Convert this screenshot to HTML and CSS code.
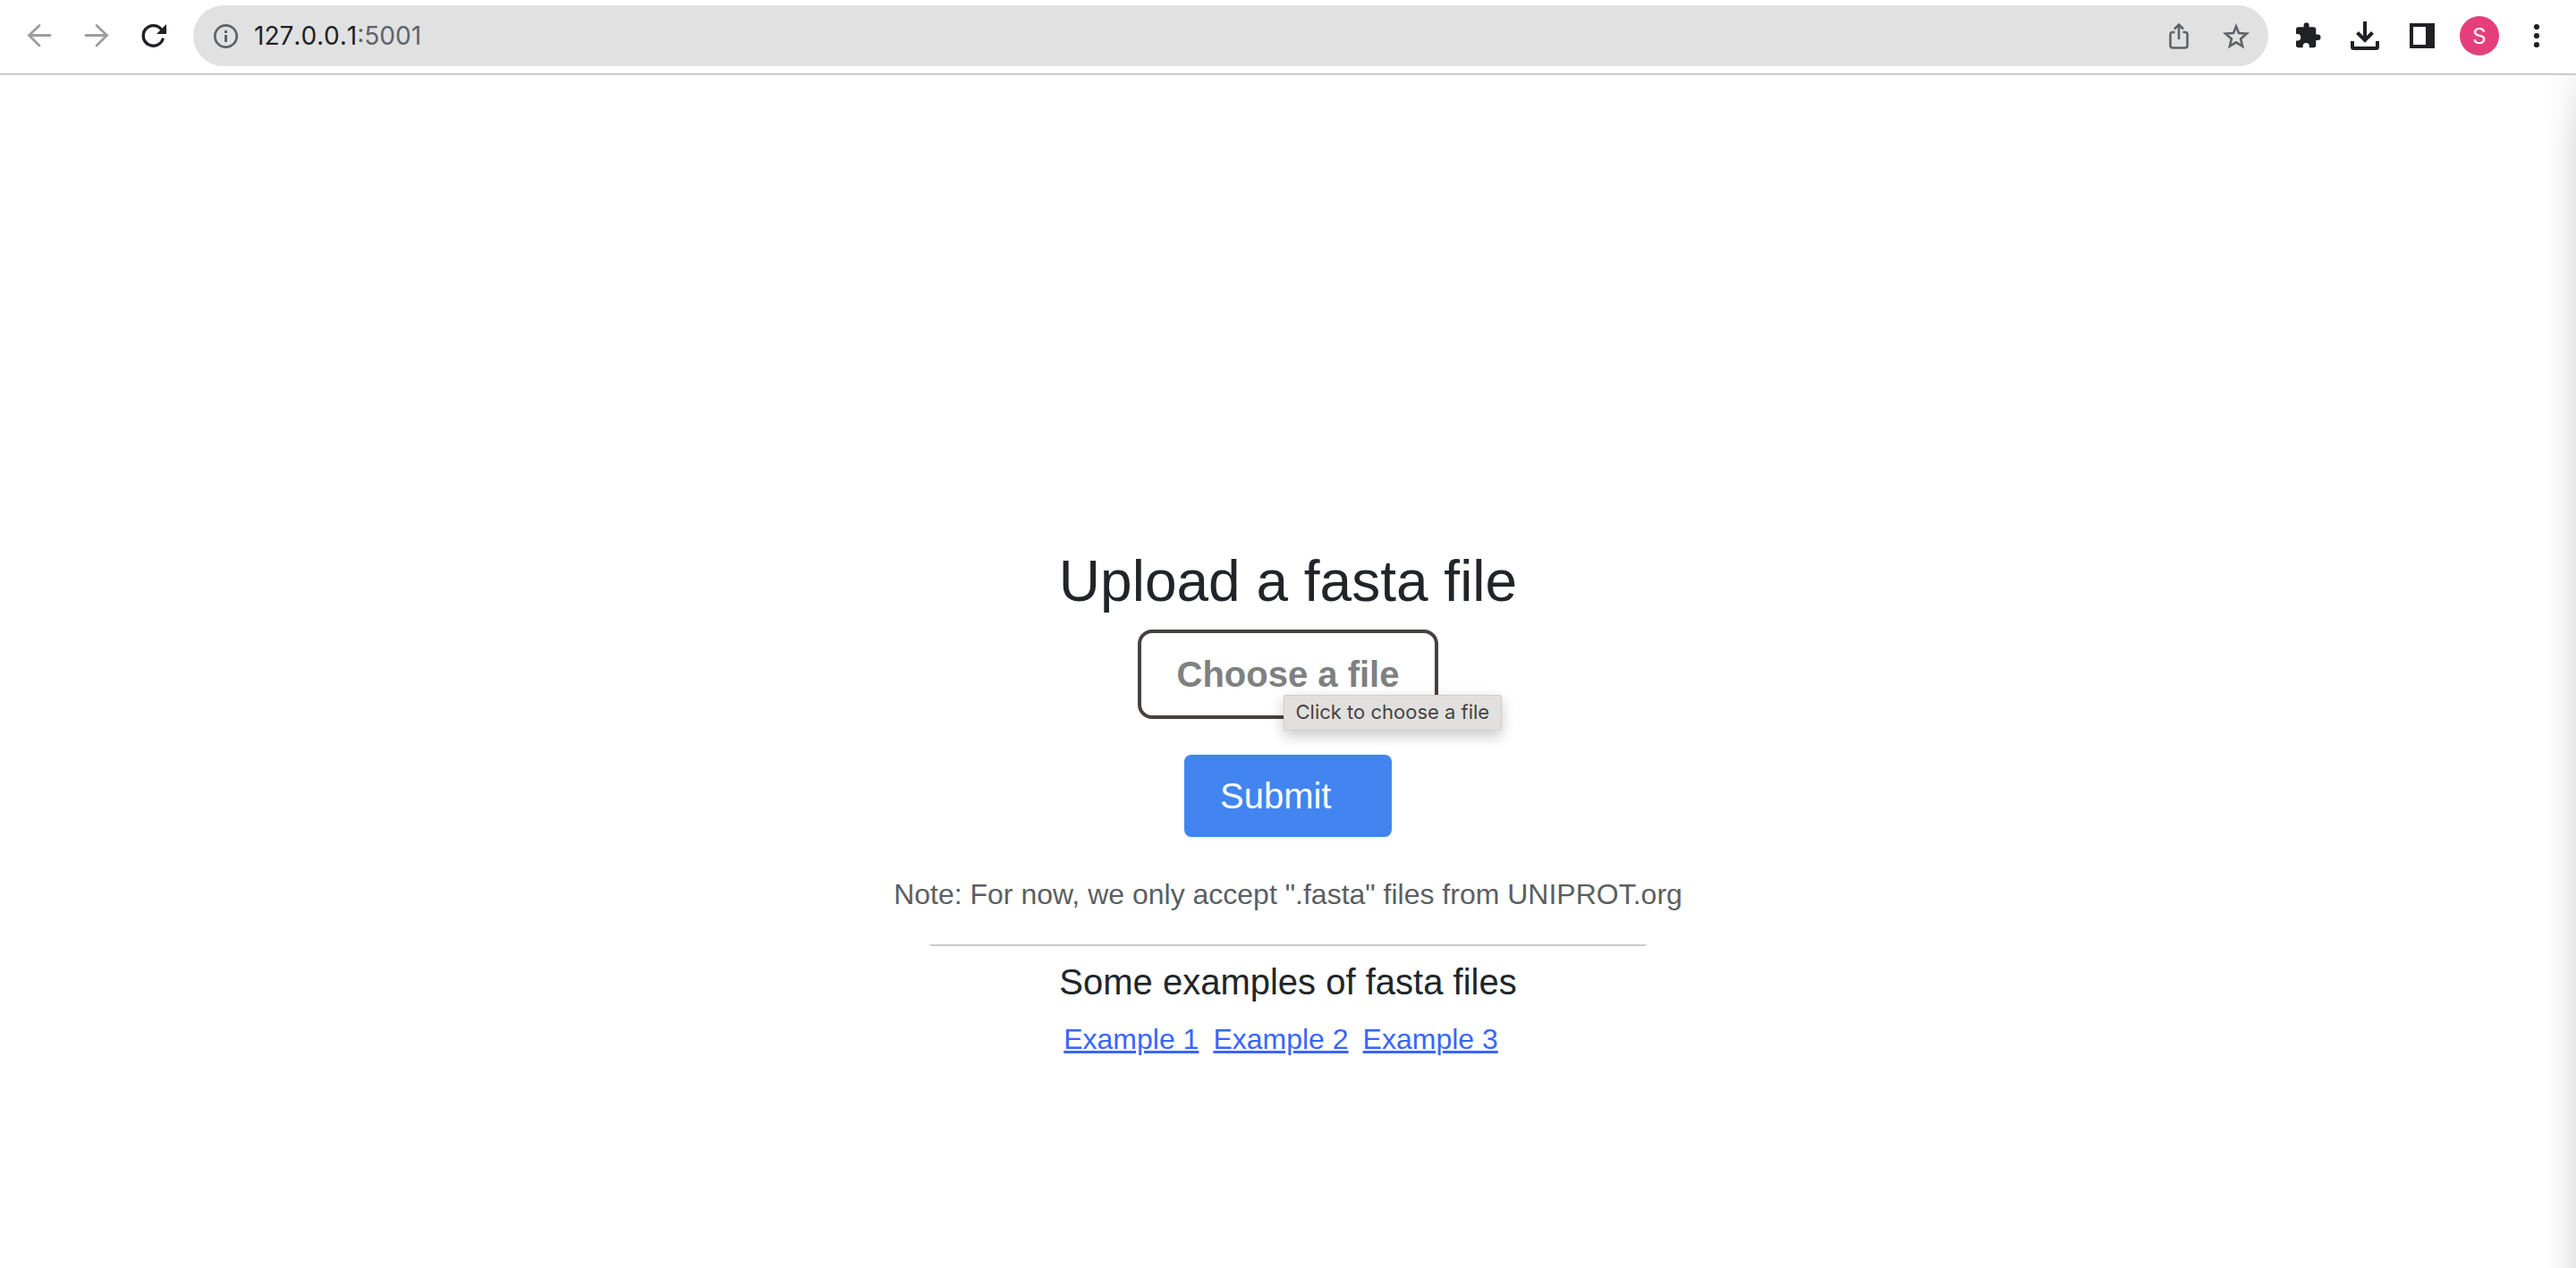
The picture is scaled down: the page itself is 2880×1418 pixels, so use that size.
FILE: index.html
```html
<!DOCTYPE html>
<html lang="en">
<head>
<meta charset="utf-8">
<title>Upload a fasta file</title>
<link rel="stylesheet" href="styles.css">
</head>
<body>
<header class="toolbar">
  <nav class="nav" aria-label="History">
    <button class="icon-button dim" aria-label="Back"><svg class="icon" viewBox="0 0 32 32" fill="none" stroke="currentColor" stroke-width="2.8" stroke-linecap="round"><path d="M28 15.500H5M16 4.500 4.500 15.500 16 27"/></svg></button>
    <button class="icon-button dim" aria-label="Forward"><svg class="icon" viewBox="0 0 32 32" fill="none" stroke="currentColor" stroke-width="2.800" stroke-linecap="round"><path d="M4 15.500h23M16 4.500l11.500 11L16 27"/></svg></button>
    <button class="icon-button" aria-label="Reload"><svg class="icon" viewBox="0 0 32 32"><path d="M26 20A11.300 11.300 0 1 1 24 8.500" fill="none" stroke="currentColor" stroke-width="3.400" stroke-linecap="round"/><path d="M30 3v11H19z" fill="currentColor"/></svg></button>
  </nav>
  <div class="address">
    <svg class="icon" viewBox="0 0 32 32"><circle cx="16.500" cy="16.500" r="12.200" fill="none" stroke="currentColor" stroke-width="2.800"/><path d="M15 10h3v3h-3zM15 15h3v8h-3z" fill="currentColor"/></svg>
    <span class="url"><span class="host">127.0.0.1</span>:5001</span>
    <button class="icon-button" aria-label="Share"><svg class="icon" viewBox="0 0 32 32" fill="none" stroke="currentColor" stroke-width="2.600"><path d="M11.500 12H9a2.500 2.500 0 0 0-2.500 2.500v12A2.500 2.500 0 0 0 9 29.500h14a2.500 2.500 0 0 0 2.500-2.500V14.500a2.500 2.500 0 0 0-2.500-2.500h-2.500M16 20V4M11 8.500l5-5 5 5"/></svg></button>
    <button class="icon-button" aria-label="Bookmark"><svg class="icon" viewBox="0 0 32 32" fill="none" stroke="currentColor" stroke-width="2.600"><path d="m16 5.500 3 7.600 8.800.6-6.700 5.700 2 8.400-7.100-4.500-7.100 4.500 2-8.400-6.700-5.700 8.800-.6z"/></svg></button>
  </div>
  <div class="actions">
    <button class="icon-button" aria-label="Extensions"><svg class="icon" viewBox="0 0 32 32" fill="currentColor"><path d="M27.300 14.500h-2V9a2.700 2.700 0 0 0-2.700-2.700h-5v-2a3 3 0 0 0-6 0v2H5.700A2.700 2.700 0 0 0 3 9v5h1.500a3.500 3.500 0 0 1 0 7.500H3v5a2.700 2.700 0 0 0 2.700 2.700h5v-1.500a3.600 3.600 0 0 1 7.200 0v1.500h4.700a2.700 2.700 0 0 0 2.700-2.700V21h2a3.200 3.200 0 0 0 0-6.500z"/></svg></button>
    <button class="icon-button" aria-label="Downloads"><svg class="icon" viewBox="0 0 32 32" fill="none" stroke="currentColor" stroke-width="4"><path d="M16 0v20M7.500 12.500l8.500 8.500 8.500-8.500M2 22v6.500A1.500 1.500 0 0 0 3.500 30h25a1.500 1.500 0 0 0 1.500-1.500V22"/></svg></button>
    <button class="icon-button" aria-label="Side panel"><svg class="icon" viewBox="0 0 32 32" fill="currentColor" fill-rule="evenodd"><path d="M2 2h28v28H2zm4 4v20h14V6z"/></svg></button>
    <button class="avatar" aria-label="Profile">S</button>
    <button class="icon-button" aria-label="Menu"><svg class="icon" viewBox="0 0 32 32" fill="currentColor"><circle cx="16" cy="6" r="3.100"/><circle cx="16" cy="16" r="3.100"/><circle cx="16" cy="26" r="3.100"/></svg></button>
  </div>
</header>
<main class="page">
  <h1 class="title">Upload a fasta file</h1>
  <form class="upload">
    <div class="picker">
      <button class="choose" type="button" aria-describedby="choose-tip">Choose a file</button>
      <span class="tooltip" id="choose-tip" role="tooltip">Click to choose a file</span>
    </div>
    <button class="submit" type="submit">Submit</button>
  </form>
  <p class="note">Note: For now, we only accept ".fasta" files from UNIPROT.org</p>
  <hr class="rule">
  <h2 class="subtitle">Some examples of fasta files</h2>
  <div class="examples">
    <a class="example" href="#example-1">Example 1</a>
    <a class="example" href="#example-2">Example 2</a>
    <a class="example" href="#example-3">Example 3</a>
  </div>
</main>
</body>
</html>
```
FILE: styles.css
```css
* { box-sizing: border-box; }

body {
  display: flex;
  flex-direction: column;
  min-height: 100vh;
  margin: 0;
  background: #fff;
  color: #212529;
  font-family: "Liberation Sans", Arial, sans-serif;
}

button {
  padding: 0;
  border: 0;
  background: none;
  color: inherit;
  font: inherit;
  cursor: pointer;
}

.toolbar {
  display: flex;
  align-items: center;
  gap: 28px;
  padding: 6px 28px 8px;
  border-bottom: 2px solid #cbcbcb;
  color: #202124;
  font-family: Inter, sans-serif;
}

.nav, .actions { display: flex; align-items: center; gap: 32px; }
.icon-button { display: flex; }
.icon { display: block; flex: none; width: 32px; height: 32px; }
.dim { color: #9d9d9d; }

.address {
  display: flex;
  flex: 1;
  align-items: center;
  gap: 32px;
  height: 68px;
  padding: 0 20px;
  border-radius: 34px;
  background: #e1e1e1;
  color: #5f6368;
}

.url {
  flex: 1;
  margin-left: -16px;
  font-size: 28px;
  font-kerning: none;
  font-optical-sizing: none;
}
.host { color: #202124; }

.avatar {
  width: 44px;
  height: 44px;
  margin: 0 -6px;
  border-radius: 50%;
  background: #e43f7b;
  color: #fff;
  font-size: 24px;
}

.page {
  position: relative;
  display: flex;
  flex: 1;
  flex-direction: column;
  align-items: center;
  padding: 528px 32px 64px;
}

/* soft shade along the right edge of the window */
.page::after {
  content: "";
  position: absolute;
  top: 0;
  right: 0;
  bottom: 0;
  width: 36px;
  background: linear-gradient(to right, transparent, #00000008 50%, #0000001a);
  mask-image: linear-gradient(to bottom, #0005, #000 80px);
}

.title { margin: 0 0 16px; font-size: 64px; font-weight: 400; line-height: 76px; }

.upload { display: flex; flex-direction: column; align-items: center; gap: 40px; }
.picker { position: relative; }

.choose {
  display: block;
  padding: 22px 40px;
  border: 4px solid #484040;
  border-radius: 16px;
  color: #808080;
  font-size: 40px;
  font-weight: 700;
  line-height: 48px;
}

.tooltip {
  position: absolute;
  top: 73px;
  left: 163px;
  padding: 0 13px 2px;
  border: 1px solid #cfcecd;
  border-radius: 2px;
  background: #e1e0de;
  box-shadow: 0 6px 16px #00000038;
  color: #444;
  font-family: Inter, sans-serif;
  font-size: 22px;
  line-height: 36px;
  white-space: nowrap;
}

.submit {
  width: 232px;
  padding: 22px 40px;
  border-radius: 8px;
  background: #4285f0;
  color: #fff;
  font-size: 40px;
  line-height: 48px;
  text-align: left;
}

.note { margin: 40px 0 32px; color: #5b5f62; font-size: 32px; line-height: 48px; }
.rule { width: 800px; max-width: 100%; height: 2px; margin: 0 0 16px; border: 0; background: #c8c9ca; }
.subtitle { margin: 0 0 16px; font-size: 40px; font-weight: 400; line-height: 48px; }
.examples { display: flex; font-size: 32px; line-height: 48px; }
.example { margin-right: 16px; color: #3965ff; text-decoration-thickness: 3px; }
```
